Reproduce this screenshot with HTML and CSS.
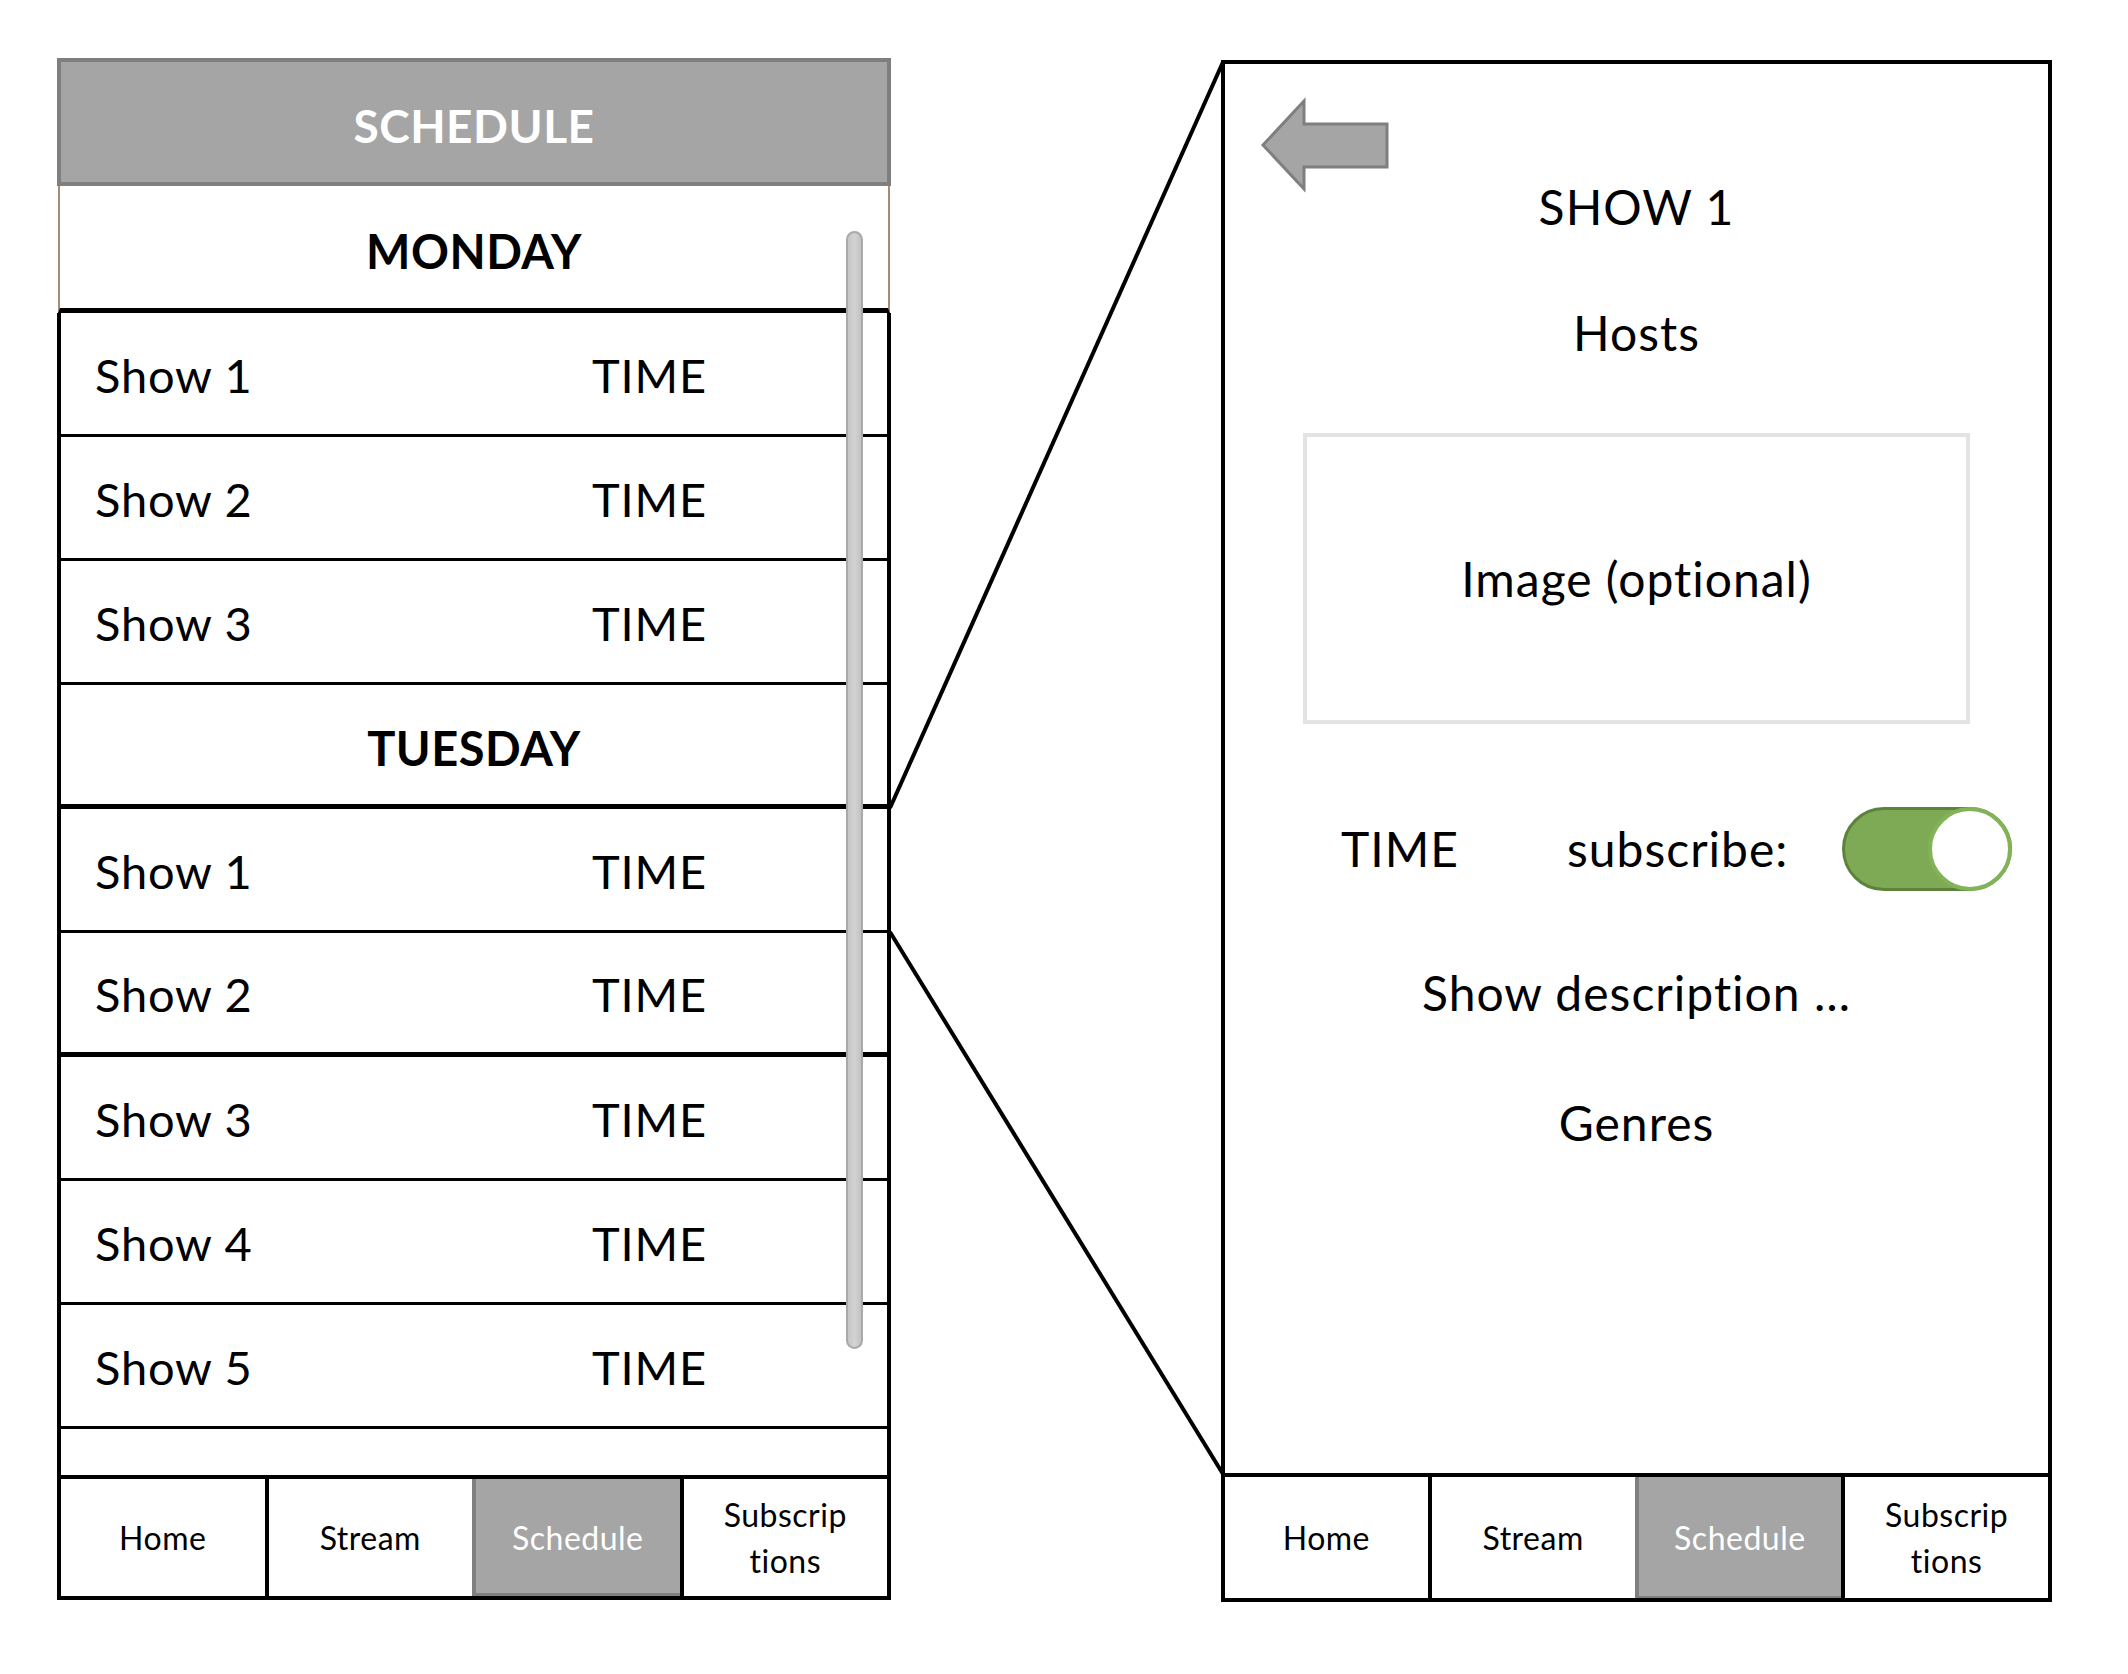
FILE: index.html
```html
<!DOCTYPE html>
<html lang="en">
<head>
    <meta charset="UTF-8">
    <title>Schedule wireframe</title>
    <link rel="stylesheet" href="styles.css">
</head>
<body>

    <div class="board">

        <!-- Schedule list -->
        <div class="phone phone-left">
            <div class="app-title">SCHEDULE</div>
            <div class="day-head first">MONDAY</div>

            <div class="list">
                <div class="show-row"><span class="show-name">Show 1</span><span>TIME</span></div>
                <div class="show-row"><span class="show-name">Show 2</span><span>TIME</span></div>
                <div class="show-row"><span class="show-name">Show 3</span><span>TIME</span></div>
                <div class="day-head">TUESDAY</div>
                <div class="show-row"><span class="show-name">Show 1</span><span>TIME</span></div>
                <div class="show-row thick"><span class="show-name">Show 2</span><span>TIME</span></div>
                <div class="show-row"><span class="show-name">Show 3</span><span>TIME</span></div>
                <div class="show-row"><span class="show-name">Show 4</span><span>TIME</span></div>
                <div class="show-row"><span class="show-name">Show 5</span><span>TIME</span></div>
                <div class="list-end"></div>
            </div>

            <div class="scrollbar"></div>

            <nav class="tabbar">
                <div class="tab">Home</div>
                <div class="tab">Stream</div>
                <div class="tab active">Schedule</div>
                <div class="tab">Subscrip<br>tions</div>
            </nav>
        </div>

        <!-- Show detail -->
        <div class="phone phone-right">
            <div class="back">
                <svg width="130" height="94" viewBox="0 0 130 94">
                    <polygon points="3,47 44,3 44,26 127,26 127,69 44,69 44,91" fill="#a5a5a5" stroke="#7f7f7f" stroke-width="3"/>
                </svg>
            </div>

            <div class="detail-title">SHOW 1</div>
            <div class="detail-hosts">Hosts</div>

            <div class="image-box">Image (optional)</div>

            <div class="info-row">
                <span class="info-time">TIME</span>
                <span class="info-sub">subscribe:</span>
                <div class="toggle"><div class="knob"></div></div>
            </div>

            <div class="detail-desc">Show description …</div>
            <div class="detail-genres">Genres</div>

            <nav class="tabbar">
                <div class="tab">Home</div>
                <div class="tab">Stream</div>
                <div class="tab active">Schedule</div>
                <div class="tab">Subscrip<br>tions</div>
            </nav>
        </div>
    </div>

    <!-- zoom lines between the two screens -->
    <svg class="connector" width="2128" height="1674" viewBox="0 0 2128 1674">
        <line x1="890" y1="808" x2="1223" y2="62" stroke="#000" stroke-width="4"/>
        <line x1="890" y1="932" x2="1223" y2="1474" stroke="#000" stroke-width="4"/>
    </svg>

</body>
</html>
```

FILE: styles.css
```css
/* Basics */
body {
    margin: 0;
    padding: 0;
    background: #fff;
    font-family: Lato, "Open Sans", sans-serif;
    font-variant-ligatures: none;
    color: #000;
}

.board {
    display: flex;
    align-items: flex-start;
    gap: 330px;
    padding: 58px 0 0 57px;
}

.phone {
    position: relative;
    box-sizing: border-box;
    width: 834px;
}

/* Left screen */
.app-title {
    box-sizing: border-box;
    height: 128px;
    padding-top: 6px;
    background: #a5a5a5;
    border: 4px solid #7f7f7f;
    color: #fff;
    font-size: 46px;
    font-weight: bold;
    letter-spacing: 0.5px;
    display: flex;
    align-items: center;
    justify-content: center;
}

.day-head {
    box-sizing: border-box;
    height: 124px;
    padding-top: 7px;
    border-bottom: 5px solid #000;
    font-size: 47px;
    font-weight: bold;
    letter-spacing: 0.5px;
    display: flex;
    align-items: center;
    justify-content: center;
}

.day-head.first {
    height: 127px;
    margin: 0 1px;
    border-left: 2px solid #a38b77;
    border-right: 2px solid #a38b77;
}

.list {
    border-left: 4px solid #000;
    border-right: 4px solid #000;
}

.show-row {
    box-sizing: border-box;
    height: 124px;
    padding-top: 3px;
    border-bottom: 3px solid #000;
    padding-left: 34px;
    display: flex;
    align-items: center;
    font-size: 47px;
    letter-spacing: 0.8px;
}

.show-row.thick {
    border-bottom-width: 5px;
}

.show-name {
    width: 497px;
}

.list-end {
    height: 46px;
}

.scrollbar {
    position: absolute;
    left: 789px;
    top: 173px;
    box-sizing: border-box;
    width: 17px;
    height: 1118px;
    background: linear-gradient(to right, #c6c6c6, #d3d3d3 50%, #c2c2c2);
    border: 2px solid #a9a9a9;
    border-radius: 9px;
}

/* Tab bar */
.tabbar {
    display: flex;
    height: 125px;
}

.phone-left .tabbar {
    box-sizing: border-box;
    border: 4px solid #000;
}

.phone-right .tabbar {
    box-sizing: border-box;
    align-self: stretch;
    height: 125px;
    margin-top: auto;
    border-top: 4px solid #000;
}

.tab {
    flex: 1;
    display: flex;
    align-items: center;
    justify-content: center;
    text-align: center;
    font-size: 32px;
    line-height: 46px;
    letter-spacing: 0.5px;
    border-left: 4px solid #000;
}

.tab:first-child {
    border-left: none;
}

.tab.active {
    background: #a5a5a5;
    color: #fff;
    border-left-color: #7f7f7f;
    box-shadow: inset 0 -3px 0 #7f7f7f;
}

.phone-right .tab.active {
    box-shadow: inset 0 -2px 0 #7f7f7f;
}

/* Right screen */
.phone-right {
    width: 831px;
    height: 1542px;
    margin-top: 2px;
    border: 4px solid #000;
    display: flex;
    flex-direction: column;
    align-items: center;
    font-size: 48px;
    line-height: 46px;
    letter-spacing: 1px;
}

.back {
    align-self: stretch;
    height: 120px;
    padding-left: 35px;
}

.back svg {
    display: block;
    margin-top: 34px;
    overflow: visible;
}

.detail-hosts {
    margin-top: 80px;
}

.image-box {
    box-sizing: border-box;
    width: 667px;
    height: 291px;
    margin-top: 77px;
    border: 4px solid #e3e3e3;
    display: flex;
    align-items: center;
    justify-content: center;
}

.info-row {
    align-self: stretch;
    display: flex;
    align-items: center;
    height: 84px;
    margin-top: 83px;
    padding-left: 116px;
}

.info-time {
    width: 226px;
}

.info-sub {
    width: 275px;
}

.toggle {
    box-sizing: border-box;
    width: 170px;
    height: 84px;
    border-radius: 42px;
    background: #7eaa55;
    border: 3px solid #5d823c;
    display: flex;
    justify-content: flex-end;
    align-items: center;
}

.knob {
    box-sizing: border-box;
    width: 84px;
    height: 84px;
    margin-right: -3px;
    border-radius: 50%;
    background: #fff;
    border: 4px solid #82b356;
}

.detail-desc {
    margin-top: 79px;
}

.detail-genres {
    margin-top: 84px;
}

/* Overlay lines */
.connector {
    position: absolute;
    top: 0;
    left: 0;
    pointer-events: none;
}
```
